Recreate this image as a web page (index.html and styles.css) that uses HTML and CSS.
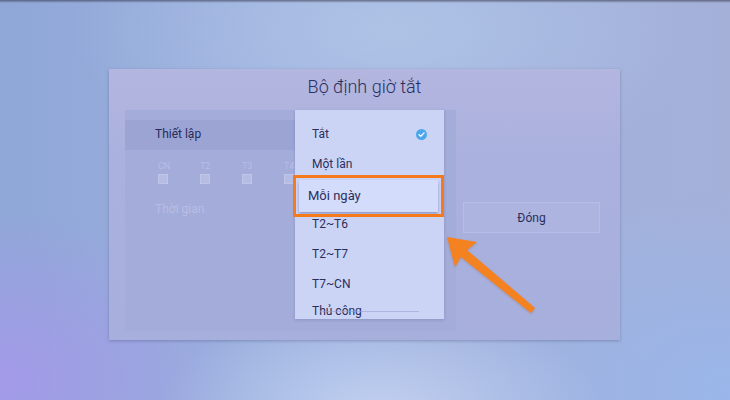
FILE: index.html
```html
<!DOCTYPE html>
<html lang="vi">
<head>
<meta charset="utf-8">
<title>Bộ định giờ tắt</title>
<link rel="stylesheet" href="styles.css">
</head>
<body>
<div class="screen">
  <div class="dialog">
    <div class="dialog-title">Bộ định giờ tắt</div>
    <div class="dialog-body">
      <div class="panel">
        <div class="row-setting">Thiết lập</div>
        <div class="days">
          <div class="day"><span>CN</span><i class="box"></i></div>
          <div class="day"><span>T2</span><i class="box"></i></div>
          <div class="day"><span>T3</span><i class="box"></i></div>
          <div class="day"><span>T4</span><i class="box"></i></div>
        </div>
        <div class="row-time">Thời gian</div>
      </div>
      <div class="side">
        <button class="btn-close">Đóng</button>
      </div>

      <div class="menu">
        <ul class="menu-list">
          <li class="item">Tắt<span class="check"><svg viewBox="0 0 12 12" width="11" height="11"><circle cx="6" cy="6" r="6" fill="#4ba6ea"/><path d="M3.3 6.2 5.2 8 8.8 4.2" fill="none" stroke="#fff" stroke-width="1.4" stroke-linecap="round" stroke-linejoin="round"/></svg></span></li>
          <li class="item">Một lần</li>
          <li class="item focus"><span class="focus-card">Mỗi ngày</span></li>
          <li class="item">T2~T6</li>
          <li class="item">T2~T7</li>
          <li class="item">T7~CN</li>
          <li class="item last">Thủ công</li>
        </ul>
        <div class="focus-frame"></div>
        <div class="scroll-line"></div>
      </div>
    </div>
  </div>

  <svg class="pointer" width="730" height="400" viewBox="0 0 730 400">
    <polygon points="447,237 477,242 467,250 535,308 531,313 461,257 455,267" fill="#f58220"/>
  </svg>
</div>
</body>
</html>
```
FILE: styles.css
```css
* { box-sizing: border-box; }

html, body {
  margin: 0;
  padding: 0;
  width: 730px;
  height: 400px;
  overflow: hidden;
}

body {
  font-family: Roboto, "Noto Sans", sans-serif;
  color: #2a2f5c;
}

.screen {
  position: relative;
  width: 730px;
  height: 400px;
  padding: 69px 0 0 109px;
  background:
    linear-gradient(to bottom, rgba(40, 40, 60, 0.55) 0, rgba(40, 40, 60, 0) 3px),
    radial-gradient(ellipse 220px 110px at 380px 410px, rgba(215, 228, 252, 0.6), rgba(215, 228, 252, 0) 100%),
    radial-gradient(ellipse 240px 170px at 0px 380px, rgba(168, 150, 236, 0.8), rgba(168, 150, 236, 0) 100%),
    radial-gradient(ellipse 280px 200px at 730px 390px, rgba(150, 184, 240, 0.75), rgba(150, 184, 240, 0) 100%),
    radial-gradient(ellipse 320px 150px at 390px 30px, rgba(180, 200, 232, 0.75), rgba(180, 200, 232, 0) 100%),
    linear-gradient(to right, #8fa7d7 0%, #9eb2e0 45%, #a4b0d8 100%);
}

/* dialog */
.dialog {
  position: relative;
  width: 511px;
  height: 271px;
  background: linear-gradient(to bottom, #b3b6df 0%, #abb1de 30%, #a7afdc 100%);
  box-shadow: 0 1px 3px rgba(60, 60, 110, 0.35);
  display: flex;
  flex-direction: column;
}

.dialog-title {
  height: 41px;
  padding-top: 7px;
  text-align: center;
  font-size: 18px;
  font-weight: 300;
  color: #2a305f;
}

.dialog-body {
  position: relative;
  flex: 1;
  display: flex;
  padding: 0 0 9px 16px;
}

.panel {
  width: 331px;
  background: #a4acd9;
  padding-top: 10px;
}

.row-setting {
  height: 30px;
  width: 170px;
  background: #9ca4d3;
  padding: 7px 0 0 30px;
  font-size: 12px;
  color: #262b58;
}

.days {
  display: flex;
  gap: 32px;
  padding: 11px 0 0 33px;
}

.day {
  display: flex;
  flex-direction: column;
  align-items: flex-start;
  width: 10px;
}

.day span {
  font-size: 9px;
  line-height: 11px;
  color: #b8bee5;
  white-space: nowrap;
}

.box {
  display: block;
  width: 10px;
  height: 10px;
  margin-top: 2px;
  border: 1px solid #c0c6e8;
  background: #b6bde5;
}

.row-time {
  padding: 18px 0 0 30px;
  font-size: 12px;
  color: #b8bee5;
}

.side {
  padding: 92px 0 0 7px;
}

.btn-close {
  width: 137px;
  height: 31px;
  border: 1px solid #b6bde6;
  background: #adb4e0;
  font-family: inherit;
  font-size: 12px;
  color: #2a2f5c;
  padding: 0;
}

/* dropdown menu over the panel */
.menu {
  position: absolute;
  left: 186px;
  top: 0;
  width: 149px;
  height: 209px;
}

.menu-list {
  height: 100%;
  margin: 0;
  padding: 9px 0 0 0;
  list-style: none;
  background: #ccd4f6;
  box-shadow: 0 1px 3px rgba(70, 80, 140, 0.25);
  overflow: hidden;
}

.item {
  position: relative;
  height: 30px;
  line-height: 30px;
  padding-left: 17px;
  font-size: 12px;
  color: #2a2f5c;
}

.check {
  position: absolute;
  right: 17px;
  top: 10px;
  line-height: 0;
}

.item.last {
  line-height: 24px;
}

.focus-card {
  position: absolute;
  left: 4px;
  right: 6px;
  top: 1px;
  height: 32px;
  line-height: 31px;
  padding-left: 9px;
  font-size: 13px;
  background: #d4dcfb;
  box-shadow: 0 2px 3px rgba(70, 80, 140, 0.45);
}

.focus-frame {
  position: absolute;
  left: -2px;
  right: 0;
  top: 65px;
  height: 42px;
  border: 3px solid #f47a1c;
  pointer-events: none;
}

.scroll-line {
  position: absolute;
  left: 25px;
  right: 25px;
  bottom: 7px;
  height: 1px;
  background: rgba(150, 160, 215, 0.6);
}

/* arrow annotation */
.pointer {
  position: absolute;
  left: 0;
  top: 0;
  pointer-events: none;
  filter: drop-shadow(0 1px 1px rgba(120, 70, 30, 0.25));
}
```
